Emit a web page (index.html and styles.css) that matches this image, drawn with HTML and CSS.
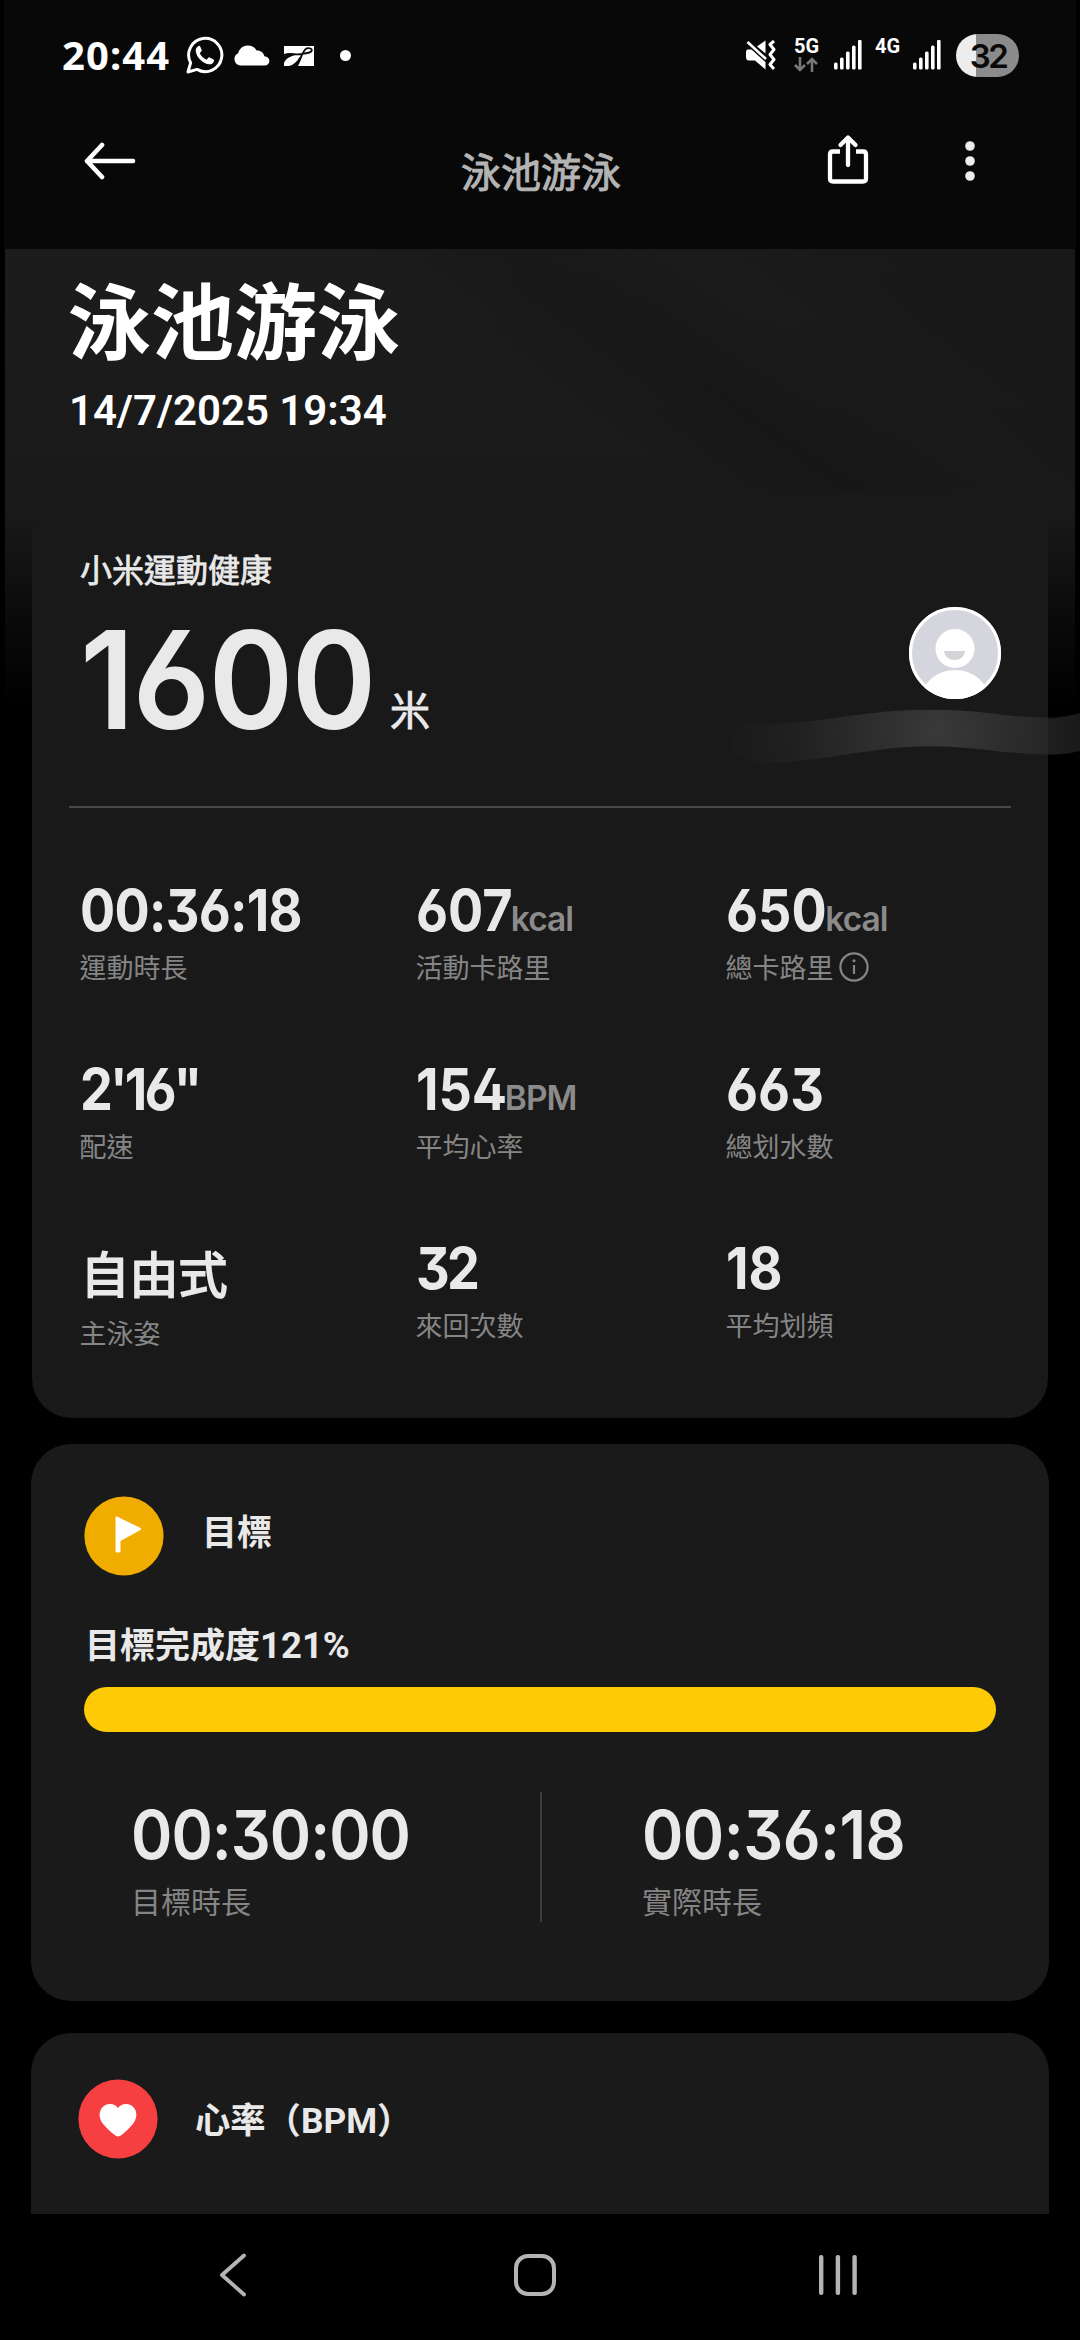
FILE: index.html
```html
<!DOCTYPE html>
<html lang="zh-Hant">
<head>
<meta charset="utf-8">
<title>泳池游泳</title>
<link rel="stylesheet" href="styles.css">
</head>
<body>
<div class="screen">
  <header class="top">
    <div class="status">
      <span class="clock">20:44</span>
      <svg class="ic-chat" width="38" height="38" viewBox="0 0 38 38" fill="none"><path d="M2 36l2.6-9.2A16.6 16.6 0 1 1 11 33.4z" stroke="#fff" stroke-width="3" stroke-linejoin="round"/><path d="M13 9.8c-2.200.9-3.700 3-3.200 5.600 1 6 6.700 11.700 12.900 12.900 2.500.4 4.500-.9 5.300-3.300.2-.8 0-1.200-.6-1.600l-3.600-1.900c-.7-.3-1.200-.2-1.700.4l-1.500 1.900c-3.200-1.200-5.600-3.600-6.800-6.700l1.500-1.500c.5-.5.6-1 .4-1.600l-1.500-3.600c-.3-.6-.7-.8-1.200-.6z" fill="#fff"/></svg>
      <svg class="ic-cloud" width="37" height="21" viewBox="0 0 37 21"><path d="M7 20.500A6.500 6.500 0 0 1 5.200 8.200C6.500 3.500 10 .5 14.800.5c4 0 7 1.900 8.800 5 4-.3 7 2 7.800 5.800 3 .3 5 2.200 5 4.700 0 2.700-2 4.500-5 4.500z" fill="#fff"/></svg>
      <svg class="ic-app" width="30" height="20" viewBox="0 0 30 20"><path d="M0 0h30v20H0z" fill="#fff"/><path d="M0 9C6 6.500 12 9.500 18 8c4-1.200 8-.5 9.500-3 1-2.200-2-3.600-5-2.500C19 4 17 12 13 20" fill="none" stroke="#0a0a0a" stroke-width="1.900"/><path d="M0 9.500c3-1 8-.5 12-.8C7 10 2 12 0 17z" fill="#0a0a0a"/><path d="M5 20c4-1 8-4 10.500-9L17 13l-4 7z" fill="#0a0a0a"/></svg>
      <span class="more-dot"></span>
      <span class="spacer"></span>
      <svg class="ic-mute" width="31" height="30" viewBox="0 0 31 30"><path d="M2 9.500h4.500L20.500 22v7.500L10 20.500H3.500Q1 20 1 17.500v-6z" fill="#fff"/><path d="M20.500.5v13L12 6.500z" fill="#fff"/><path d="M2.500 2l18.500 17" stroke="#fff" stroke-width="2.600"/><path d="M29 1l-4 3.500 4 5-4 5 4 5-4 5L29 29" fill="none" stroke="#fff" stroke-width="3" stroke-linejoin="round"/></svg>
      <span class="net net-a"><b>5G</b><svg width="24" height="15" viewBox="0 0 24 15" fill="none" stroke="#777" stroke-width="2.600"><path d="M6 0v13M1 8l5 5 5-5M18 15V2M13 7l5-5 5 5"/></svg></span>
      <svg class="bars" width="28" height="30" viewBox="0 0 28 30" fill="#fff"><rect y="22.500" width="3.600" height="7" rx="1.500"/><rect x="6" y="17.500" width="3.600" height="12" rx="1.500"/><rect x="12" y="11.500" width="3.600" height="18" rx="1.500"/><rect x="18" y="5.500" width="3.600" height="24" rx="1.500"/><rect x="24" y="0" width="3.600" height="29.500" rx="1"/></svg>
      <span class="net net-b"><b>4G</b></span>
      <svg class="bars" width="28" height="30" viewBox="0 0 28 30" fill="#fff"><rect y="22.500" width="3.600" height="7" rx="1.500"/><rect x="6" y="17.500" width="3.600" height="12" rx="1.500"/><rect x="12" y="11.500" width="3.600" height="18" rx="1.500"/><rect x="18" y="5.500" width="3.600" height="24" rx="1.500"/><rect x="24" y="0" width="3.600" height="29.500" rx="1"/></svg>
      <span class="battery">32</span>
    </div>
    <div class="appbar">
      <svg width="52" height="38" viewBox="0 0 52 38" fill="none" stroke="#fff" stroke-width="4.600" stroke-linecap="round" stroke-linejoin="round"><path d="M49 19H3M18 3L3 19l15 16"/></svg>
      <h2 class="appbar-title">泳池游泳</h2>
      <svg class="ic-share" width="42" height="50" viewBox="0 0 42 50" fill="none" stroke="#fff" stroke-width="4.300"><path d="M13 17.500H6Q3 17.500 3 20.500v24Q3 47.500 6 47.500h30q3 0 3-3v-24q0-3-3-3h-7"/><path d="M21 31V4M13.500 11L21 3.500l7.500 7.500" stroke-linecap="round" stroke-linejoin="round"/></svg>
      <svg class="ic-more" width="10" height="42" viewBox="0 0 10 42" fill="#eee"><circle cx="5" cy="6" r="4.800"/><circle cx="5" cy="21" r="4.800"/><circle cx="5" cy="36" r="4.800"/></svg>
    </div>
  </header>

  <main class="content">
    <section class="hero">
      <h1>泳池游泳</h1>
      <p class="date">14/7/2025 19:34</p>
    </section>

    <section class="card summary">
      <p class="source">小米運動健康</p>
      <div class="distance">
        <span class="distance-num">1600</span><span class="distance-unit">米</span>
        <svg class="avatar" width="92" height="92" viewBox="0 0 92 92"><defs><clipPath id="face"><circle cx="46" cy="46" r="46"/></clipPath></defs><g clip-path="url(#face)"><path d="M0 0h92v92H0z" fill="#d5d6dd"/><circle cx="46" cy="41.500" r="19.500" fill="#fff"/><path d="M35 44h21c-1 12-20 12-21 0z" fill="#d3d4d8"/><ellipse cx="46" cy="93" rx="34" ry="30" fill="#fff"/></g><circle cx="46" cy="46" r="44.500" fill="none" stroke="#fff" stroke-width="3"/></svg>
      </div>
      <svg class="smear" width="356" height="56" viewBox="0 0 356 56"><defs><radialGradient id="smear" gradientUnits="userSpaceOnUse" cx="214" cy="22" r="215"><stop offset="0" stop-color="#fff" stop-opacity=".14"/><stop offset=".4" stop-color="#fff" stop-opacity=".075"/><stop offset=".72" stop-color="#fff" stop-opacity=".025"/><stop offset="1" stop-color="#fff" stop-opacity=".004"/></radialGradient></defs><path d="M22 14C80 17 110 7 170 2Q214-1 256 3C300 8 320 12 356 4V42C330 48 310 45 280 43Q214 34 170 39C110 46 80 54 40 54 10 54-5 30 22 14z" fill="url(#smear)"/><path d="M324 9.500Q340 9 356 4V42Q340 46 324 46z" fill="#fff" fill-opacity=".07"/></svg>
      <div class="stats">
        <div class="stat"><p class="value"><span class="num num-time">00:36:18</span></p><p class="label">運動時長</p></div>
        <div class="stat"><p class="value"><span class="num">607</span><span class="unit">kcal</span></p><p class="label">活動卡路里</p></div>
        <div class="stat"><p class="value"><span class="num">650</span><span class="unit">kcal</span></p><p class="label">總卡路里<svg width="30" height="30" viewBox="0 0 30 30" fill="none" stroke="#858585" stroke-width="2.200"><circle cx="15" cy="15" r="13.600"/><path d="M15 13v9"/><circle cx="15" cy="8.700" r="1.500" fill="#858585" stroke="none"/></svg></p></div>
        <div class="stat"><p class="value"><span class="num num-pace">2'16"</span></p><p class="label">配速</p></div>
        <div class="stat"><p class="value"><span class="num">154</span><span class="unit">BPM</span></p><p class="label">平均心率</p></div>
        <div class="stat"><p class="value"><span class="num">663</span></p><p class="label">總划水數</p></div>
        <div class="stat"><p class="value value-han">自由式</p><p class="label">主泳姿</p></div>
        <div class="stat"><p class="value"><span class="num num-laps">32</span></p><p class="label">來回次數</p></div>
        <div class="stat"><p class="value"><span class="num">18</span></p><p class="label">平均划頻</p></div>
      </div>
    </section>

    <section class="card goal">
      <div class="card-head">
        <svg width="80" height="80" viewBox="0 0 80 80"><circle cx="40" cy="40" r="39.600" fill="#f0ad00"/><path d="M31.500 22q0-2 2-1.200L56 31.800q2 1 0 2.400L36.500 45v10q0 1.500-1.500 1.500h-2q-1.500 0-1.500-1.500z" fill="#fff"/></svg>
        <h3>目標</h3>
      </div>
      <p class="progress-text">目標完成度<span class="percent">121%</span></p>
      <div class="progress"></div>
      <div class="compare">
        <div class="compare-cell"><p class="big">00:30:00</p><p class="label label-lg">目標時長</p></div>
        <div class="compare-cell compare-right"><p class="big big-actual">00:36:18</p><p class="label label-lg">實際時長</p></div>
      </div>
    </section>

    <section class="card heart">
      <div class="card-head">
        <svg width="80" height="80" viewBox="0 0 80 80"><circle cx="40" cy="40" r="39.600" fill="#f53f40"/><path d="M40 57.500Q36 57 26 46c-5-5.500-5.500-12-2.500-16.500C27.500 24 36 23.500 40 29c4-5.500 12.500-5 16.500.500C59.500 34 59 40.500 54 46 44 57 41 57.500 40 57.500z" fill="#fff"/></svg>
        <h3>心率（BPM）</h3>
      </div>
    </section>
  </main>

  <nav class="nav">
    <svg width="28" height="44" viewBox="0 0 28 44" fill="none" stroke="#b4b4b4" stroke-width="3.800" stroke-linecap="round" stroke-linejoin="round"><path d="M25 2.500L3 22l22 19.500"/></svg>
    <svg class="nav-home" width="42" height="42" viewBox="0 0 42 42" fill="none" stroke="#b4b4b4" stroke-width="4"><rect x="2" y="2" width="38" height="38" rx="12"/></svg>
    <svg width="40" height="42" viewBox="0 0 40 42" fill="#b4b4b4"><rect x="1" y="1" width="4.400" height="40" rx="2"/><rect x="17.700" y="1" width="4.400" height="40" rx="2"/><rect x="34.400" y="1" width="4.400" height="40" rx="2"/></svg>
  </nav>
</div>
</body>
</html>
```

FILE: styles.css
```css
* { box-sizing: border-box; }
body, h1, h2, h3, p { margin: 0; font-weight: inherit; }
body { background: #000; color: #fff; font-family: "Noto Sans CJK TC", sans-serif; }
svg { display: block; flex: none; }

.screen { display: flex; flex-direction: column; width: 1080px; height: 2340px; overflow: hidden; background: #000; }

.top { flex: none; height: 249px; margin: 0 4px; background: #080808; }
.status { display: flex; align-items: center; height: 110px; padding: 0 57px 0 58px; }
.clock { font: 700 40px/40px "Noto Sans", sans-serif; width: 124px; letter-spacing: 1.1px; }
.ic-cloud { margin-left: 9px; }
.ic-app { margin: 2px 0 0 14px; }
.more-dot { width: 11px; height: 11px; margin-left: 26px; border-radius: 50%; background: #fff; }
.spacer { flex: 1; }
.net { display: flex; flex-direction: column; gap: 3px; height: 32px; }
.net b { font: 700 20px/15px Roboto, sans-serif; }
.net-a { margin-left: 18px; width: 25px; }
.bars { margin-left: 15px; }
.net-b { margin-left: 13px; width: 25px; }
.net-b + .bars { margin-left: 13px; }
.battery { width: 63px; height: 43px; margin-left: 15px; border-radius: 22px; background: linear-gradient(90deg, #ededed 20px, #8b8b8b 20px); color: #0a0a0a; font: 600 33px/44px Inter, sans-serif; letter-spacing: -2.5px; text-align: center; padding-left: 1px; }

.appbar { display: flex; align-items: center; height: 102px; padding: 0 101px 0 80px; }
.appbar-title { flex: 1; padding: 18px 0 0 325px; font-size: 40px; line-height: 40px; font-weight: 400; color: #b4b4b4; -webkit-text-stroke: 1px #b4b4b4; }
.ic-share { margin-top: -4px; }
.ic-more { margin-left: 96px; }

.content { flex: none; height: 1965px; overflow: hidden; background: linear-gradient(180deg, #1c1c1c 0, #1a1a1a 260px, #0a0a0a 370px, #000 460px) no-repeat 5px 0 / 1070px 100%; }
.hero { height: 241px; margin: 0 5px; padding: 26px 0 0 63px; background: linear-gradient(35deg, transparent 48%, rgba(0,0,0,.14) 60%, rgba(0,0,0,.03) 72%, rgba(0,0,0,.14) 88%); }
.hero h1 { font-size: 83px; line-height: 84px; font-weight: 700; }
.date { margin-top: 31px; padding-left: 1px; font: 600 42px/42px Roboto, sans-serif; }

.card { width: 1018px; margin: 0 auto; border-radius: 40px; background: #1a1a1a; color: #e9e9e9; }
.summary { position: relative; width: 1016px; height: 928px; padding: 58px 37px 0; background: #191919; }
.source { padding-left: 11px; font-size: 32px; line-height: 40px; -webkit-text-stroke: .8px #e9e9e9; }
.distance { display: flex; height: 178px; margin-top: 42px; padding-left: 11px; border-bottom: 2px solid #484848; }
.distance-num { width: 310px; font: 600 136px/100px Inter, sans-serif; font-feature-settings: "cv03", "cv09", "ss01"; letter-spacing: -2px; transform: scaleX(.947); transform-origin: left; }
.distance-unit { padding-top: 57px; font-size: 40px; line-height: 42px; -webkit-text-stroke: 1px #e9e9e9; }
.avatar { margin: -23px 10px 0 auto; }
.smear { position: absolute; left: 692px; top: 219px; }

.stats { display: grid; grid-template-columns: 336px 310px 1fr; row-gap: 85px; margin-top: 80px; padding-left: 10.5px; }
.value { display: flex; align-items: baseline; height: 44px; font: 650 58px/44px Inter, sans-serif; }
.num { font-feature-settings: "cv03", "cv09", "ss01"; transform: scaleX(.9); transform-origin: left; }
.num-time { letter-spacing: -.8px; }
.num-pace { letter-spacing: -3.2px; }
.num-laps { letter-spacing: -3px; }
.unit { margin-left: -12px; font-size: 33.5px; line-height: 44px; font-weight: 600; letter-spacing: -1px; color: #8b8b8b; }
.value-han { height: 52px; font: 400 49px/52px "Noto Sans CJK TC", sans-serif; padding-left: 1px; -webkit-text-stroke: 1.8px #e9e9e9; }
.label { display: flex; gap: 5px; margin-top: 20px; height: 30px; font-size: 27px; line-height: 30px; color: #858585; }

.goal { height: 557px; margin-top: 26px; padding: 52px 53px 0; }
.card-head { display: flex; }
.card-head h3 { margin-left: 38px; padding-top: 18px; font: 700 35px/40px Roboto, "Noto Sans CJK TC", sans-serif; }
.progress-text { margin-top: 51px; font: 700 35px/40px Roboto, "Noto Sans CJK TC", sans-serif; padding-left: 1px; }
.percent { font-size: 36.5px; line-height: 1; }
.progress { height: 45px; margin-top: 20px; border-radius: 23px; background: #fec905; }
.compare { display: grid; grid-template-columns: 1fr 1fr; height: 130px; margin-top: 60px; }
.compare-cell { padding: 17px 0 0 47px; }
.compare-right { padding-left: 100px; border-left: 2px solid #3c3c3c; }
.big { width: 300px; font: 570 68px/50px Inter, sans-serif; font-feature-settings: "cv03", "cv09", "ss01"; letter-spacing: -1.1px; transform: scaleX(.923); transform-origin: left; }
.big-actual { letter-spacing: -.6px; }
.label-lg { margin-top: 25px; font-size: 30px; line-height: 32px; }

.heart { height: 240px; margin-top: 32px; padding: 46px 47px 0; }
.heart h3 { margin-left: 37px; padding-top: 22px; font-size: 35.3px; }

.nav { display: flex; align-items: center; justify-content: space-between; height: 126px; padding: 0 222px 4px 219px; background: #000; }
.nav-home { margin-left: 5px; }
```
